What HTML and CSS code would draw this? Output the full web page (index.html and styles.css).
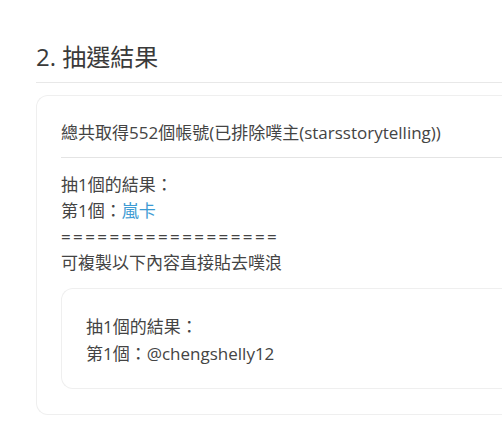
FILE: index.html
```html
<!DOCTYPE html>
<html lang="zh-Hant">
<head>
    <meta charset="UTF-8">
    <meta name="viewport" content="width=device-width, initial-scale=1.0">
    <title>抽選結果</title>
    <link rel="stylesheet" href="styles.css">
</head>
<body>
    <div class="page">
        <h2 class="title">2. 抽選結果</h2>

        <div class="card">
            <div class="card-header">總共取得552個帳號(已排除噗主(starsstorytelling))</div>
            <div class="card-body">
                <div>抽1個的結果：</div>
                <div>第1個：<a class="user-link" href="#">嵐卡</a></div>
                <div class="divider-text">==================</div>
                <div>可複製以下內容直接貼去噗浪</div>

                <div class="copy-box">
                    <div>抽1個的結果：</div>
                    <div>第1個：@chengshelly12</div>
                </div>
            </div>
        </div>
    </div>
</body>
</html>
```

FILE: styles.css
```css
body { margin: 0; font-family: "Open Sans", "Noto Sans CJK TC", sans-serif; color: #444; background: #fff; }
.page { padding: 40px 0 0 36px; }
.title { font-size: 24px; font-weight: 400; color: #3a3a3a; margin: 0; padding-bottom: 8px; line-height: 34px; border-bottom: 1px solid #e8e8e8; }
.card { margin-top: 12px; border: 1px solid #efefef; border-right: none; border-radius: 12px 0 0 12px; padding: 0 0 25px 24px; font-size: 17px; }
.card-header { padding: 26px 0 13px; line-height: 22px; border-bottom: 1px solid #e4e4e4; }
.card-body { padding-top: 14px; line-height: 26px; }
.divider-text { letter-spacing: 2.4px; }
.user-link { color: #3d9bd3; text-decoration: none; }
.copy-box { margin-top: 12px; border: 1px solid #efefef; border-right: none; border-radius: 12px 0 0 12px; padding: 24px 0 21px 24px; line-height: 27px; }
```
